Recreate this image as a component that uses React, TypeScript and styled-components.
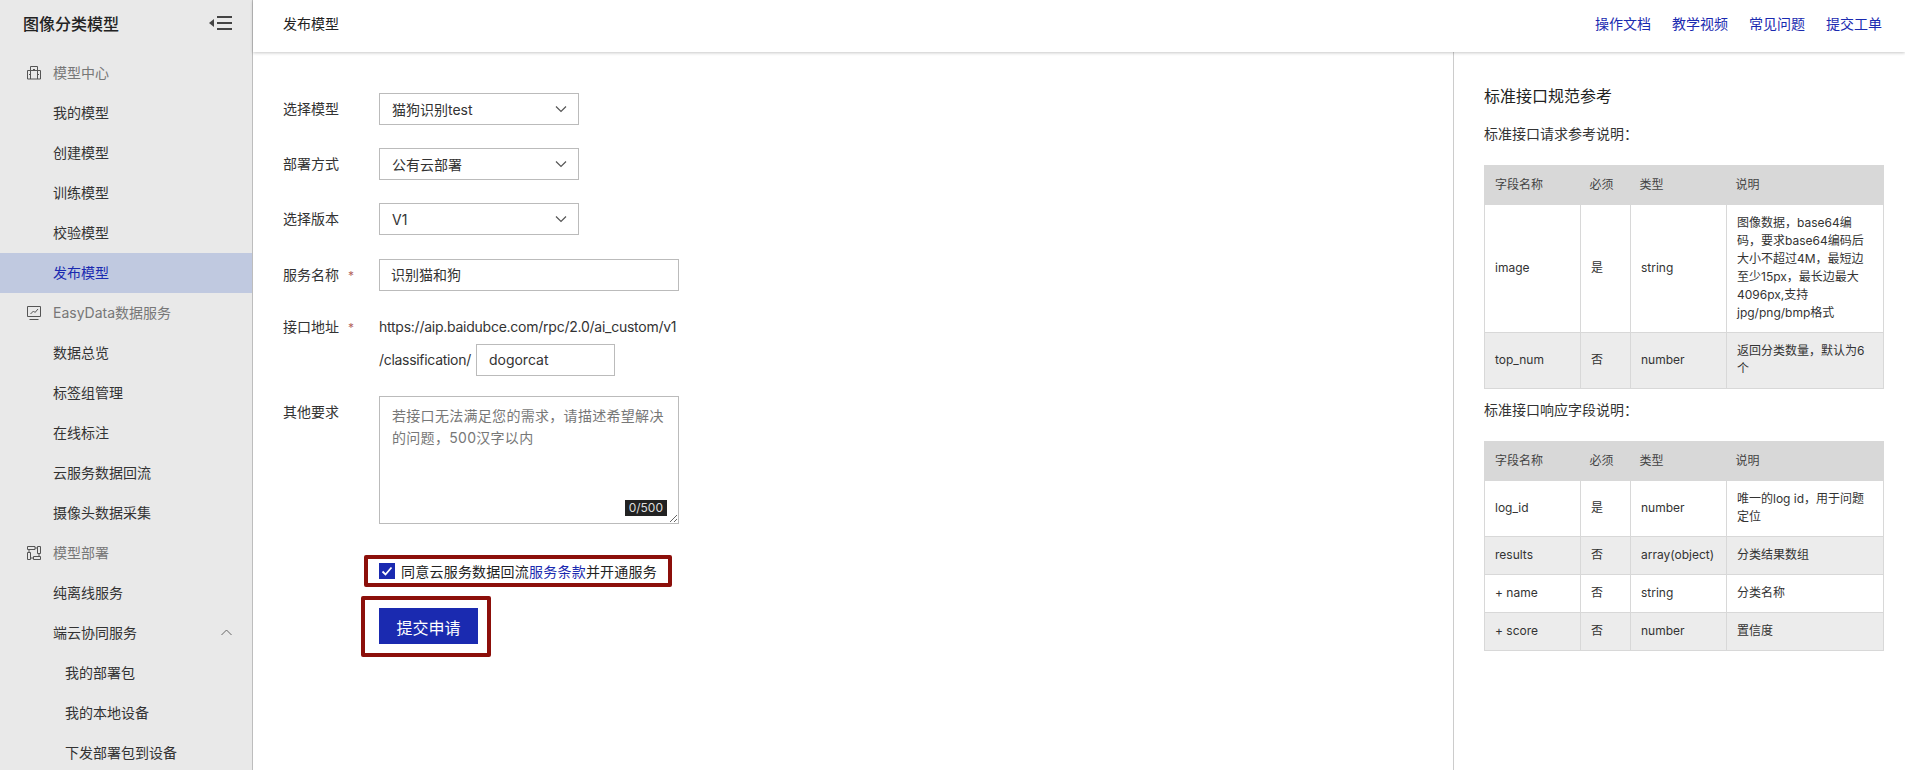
import React from "react";
import styled, { createGlobalStyle } from "styled-components";

const Global = createGlobalStyle`
  html, body { margin: 0; padding: 0; height: 770px; overflow: hidden; background: #fff; }
  body { font-family: Inter, "Noto Sans CJK SC", sans-serif; color: #333; font-size: 14px; }
  * { box-sizing: border-box; }
`;

const Page = styled.div`
  display: flex;
  width: 1905px;
  height: 770px;
  overflow: hidden;
`;

const Sidebar = styled.aside`
  width: 253px;
  height: 770px;
  flex: none;
  background: #e9e9e9;
  border-right: 1px solid #bdbdbd;
  overflow: hidden;
  color: #333;
`;

const SideHead = styled.div`
  display: flex;
  align-items: center;
  justify-content: space-between;
  height: 46px;
  padding: 0 20px 1px 23px;
  margin-bottom: 7px;
  font-size: 16px;
  font-weight: 500;
  color: #222;
`;

const NavItem = styled.div<{ $kind?: "group" | "active" | "sub" }>`
  display: flex;
  align-items: center;
  height: 40px;
  flex: none;
  padding: 0 20px 2px ${(p) => (p.$kind === "sub" ? 65 : 53)}px;
  position: relative;
  color: ${(p) =>
    p.$kind === "group" ? "#777" : p.$kind === "active" ? "#1a2ab0" : "#333"};
  background: ${(p) => (p.$kind === "active" ? "#c0c9e0" : "transparent")};
`;

const NavIcon = styled.svg`
  position: absolute;
  left: 27px;
  top: 13px;
  width: 14px;
  height: 14px;
  fill: none;
  stroke: #555;
  stroke-width: 1;
`;

const Chevron = styled.svg`
  margin-left: auto;
  width: 11px;
  height: 7px;
  fill: none;
  stroke: #666;
  stroke-width: 1;
`;

const Main = styled.div`
  flex: 1;
  display: flex;
  flex-direction: column;
  min-width: 0;
`;

const TopBar = styled.header`
  height: 52px;
  flex: none;
  display: flex;
  align-items: center;
  justify-content: space-between;
  padding: 0 23px 7px 30px;
  background: #fff;
  box-shadow: 0 1px 3px rgba(0, 0, 0, 0.22);
  color: #222;
  position: relative;
`;

const TopLinks = styled.nav`
  display: flex;
  gap: 21px;
`;

const BlueLink = styled.a`
  color: #1a2ab0;
  text-decoration: none;
`;

const Body = styled.div`
  flex: 1;
  display: flex;
  min-height: 0;
`;

const FormArea = styled.main`
  flex: 1;
  padding: 41px 0 0 30px;
`;

const FormRow = styled.div<{ $mb?: number }>`
  display: flex;
  margin-bottom: ${(p) => p.$mb ?? 23}px;
`;

const Label = styled.label`
  width: 96px;
  flex: none;
  line-height: 31px;
  height: 32px;
  color: #333;
`;

const Star = styled.span`
  color: #b5655f;
  margin-left: 9px;
  font-size: 12px;
`;

const SelectBox = styled.div`
  width: 200px;
  height: 32px;
  border: 1px solid #bbb;
  display: flex;
  align-items: center;
  justify-content: space-between;
  padding: 0 11px 0 12px;
  background: #fff;
  color: #333;
`;

const SelectArrow = styled.svg`
  width: 12px;
  height: 8px;
  fill: none;
  stroke: #555;
  stroke-width: 1.2;
`;

const TextField = styled.div<{ $w: number; $cjk?: boolean }>`
  width: ${(p) => p.$w}px;
  height: 32px;
  border: 1px solid #bbb;
  display: flex;
  align-items: center;
  padding: 0 12px ${(p) => (p.$cjk ? 3 : 1)}px ${(p) => (p.$cjk ? 11 : 12)}px;
  background: #fff;
  color: #333;
  flex: none;
`;

const AddressCol = styled.div`
  width: 300px;
  display: flex;
  flex-direction: column;
`;

const AddressLine = styled.div`
  line-height: 31px;
  white-space: nowrap;
  height: 33px;
  color: #333;
  letter-spacing: -0.25px;
`;

const AddressRow = styled.div`
  display: flex;
  align-items: center;
  gap: 5px;
`;

const AddressPrefix = styled.span`
  letter-spacing: -0.3px;
  margin-top: -2px;
`;

const TextAreaBox = styled.div`
  width: 300px;
  height: 128px;
  border: 1px solid #bbb;
  padding: 8px 12px;
  line-height: 22px;
  letter-spacing: 0.3px;
  color: #777;
  position: relative;
`;

const Counter = styled.span`
  position: absolute;
  right: 11px;
  bottom: 7px;
  background: #222;
  color: #ddd;
  font-size: 12px;
  line-height: 16px;
  letter-spacing: 0;
  padding: 0 4px;
`;

const Grip = styled.svg`
  position: absolute;
  right: 0;
  bottom: 0;
  width: 9px;
  height: 9px;
  stroke: #666;
  stroke-width: 1;
`;

const AgreeBox = styled.div`
  width: 308px;
  height: 32px;
  margin-left: 81px;
  border: 4px solid #8c0f0a;
  border-radius: 2px;
  display: flex;
  align-items: center;
  padding-left: 11px;
  gap: 6px;
  color: #222;
  white-space: nowrap;
  letter-spacing: 0.22px;
`;

const CheckMark = styled.svg`
  width: 16px;
  height: 16px;
  flex: none;
`;

const SubmitFrame = styled.div`
  width: 130px;
  height: 61px;
  margin: 9px 0 0 78px;
  border: 4px solid #8c0f0a;
  border-radius: 2px;
  padding: 8px 0 0 14px;
`;

const SubmitButton = styled.button`
  width: 99px;
  height: 36px;
  border: 0;
  padding: 2px 0 0;
  background: #1a2ab0;
  color: #fff;
  font: inherit;
  font-size: 16px;
`;

const RefPanel = styled.section`
  width: 452px;
  flex: none;
  border-left: 1px solid #ccc;
  padding: 33px 22px 0 30px;
`;

const RefTitle = styled.h2`
  margin: 0;
  font-size: 16px;
  font-weight: 400;
  line-height: 22px;
  color: #222;
`;

const RefSub = styled.p<{ $top: number }>`
  margin: ${(p) => p.$top}px 0 20px;
  line-height: 22px;
  color: #333;
`;

const SpecTable = styled.table`
  width: 399px;
  table-layout: fixed;
  border-collapse: collapse;
  font-size: 12px;
  line-height: 18px;
  color: #333;
  border: 1px solid #d8d8d8;
`;

const HeadCell = styled.th<{ $w: number }>`
  width: ${(p) => p.$w}px;
  height: 39px;
  background: #d8d8d8;
  font-weight: 400;
  text-align: left;
  padding: 0 9px;
  color: #444;
  &:first-child { padding-left: 10px; }
`;

const BodyRow = styled.tr`
  &:nth-child(even) td { background: #ececec; }
`;

const Cell = styled.td`
  border: 1px solid #d8d8d8;
  padding: 9px 10px 10px;
  vertical-align: middle;
  background: #fff;
`;

const COLS = [96, 50, 96, 157];
const HEADS = ["字段名称", "必须", "类型", "说明"];

const req = [
  ["image", "是", "string", "图像数据，base64编码，要求base64编码后大小不超过4M，最短边至少15px，最长边最大4096px,支持jpg/png/bmp格式"],
  ["top_num", "否", "number", "返回分类数量，默认为6个"],
];
const res = [
  ["log_id", "是", "number", "唯一的log id，用于问题定位"],
  ["results", "否", "array(object)", "分类结果数组"],
  ["+ name", "否", "string", "分类名称"],
  ["+ score", "否", "number", "置信度"],
];

const Spec = ({ rows }: { rows: string[][] }) => (
  <SpecTable>
    <thead>
      <tr>
        {HEADS.map((h, i) => (
          <HeadCell key={h} $w={COLS[i]}>{h}</HeadCell>
        ))}
      </tr>
    </thead>
    <tbody>
      {rows.map((r) => (
        <BodyRow key={r[0]}>
          {r.map((c, i) => (
            <Cell key={i}>{c}</Cell>
          ))}
        </BodyRow>
      ))}
    </tbody>
  </SpecTable>
);

const Arrow = () => (
  <SelectArrow viewBox="0 0 12 8"><path d="M1 1.5 6 6.5 11 1.5" /></SelectArrow>
);

const MenuToggle = () => (
  <svg width="23" height="16" viewBox="0 0 23 16" fill="none">
    <path d="M0 8 5 4v8z" fill="#444" />
    <path d="M8 2h15M8 8h15M8 14h15" stroke="#444" strokeWidth="1.8" />
  </svg>
);

export default function App() {
  return (
    <Page>
      <Global />
      <Sidebar>
        <SideHead>图像分类模型<MenuToggle /></SideHead>
        <NavItem $kind="group">
          <NavIcon viewBox="0 0 14 14"><path d="M.5 4.500h13v8.500H.5zM3.500 13V.5h7V13M2 8.500h1.500M6 3.500h2M10.500 8.500H12" /></NavIcon>
          模型中心
        </NavItem>
        <NavItem>我的模型</NavItem>
        <NavItem>创建模型</NavItem>
        <NavItem>训练模型</NavItem>
        <NavItem>校验模型</NavItem>
        <NavItem $kind="active">发布模型</NavItem>
        <NavItem $kind="group">
          <NavIcon viewBox="0 0 14 14"><path d="M.5.500h13v10H.500zM2.500 13.500h9M3.500 8l3-3 1.500 1.500 3-3.500" /></NavIcon>
          EasyData数据服务
        </NavItem>
        <NavItem>数据总览</NavItem>
        <NavItem>标签组管理</NavItem>
        <NavItem>在线标注</NavItem>
        <NavItem>云服务数据回流</NavItem>
        <NavItem>摄像头数据采集</NavItem>
        <NavItem $kind="group">
          <NavIcon viewBox="0 0 14 14"><path d="M.5.500H8v3H.500zM10.500.500h3v7h-3zM.5 6.500h3v7h-3zM6.500 10.500h7v3h-7zM8 2h2.500M12 7.500v3M3.500 12h3M2 3.500v3" /></NavIcon>
          模型部署
        </NavItem>
        <NavItem>纯离线服务</NavItem>
        <NavItem>
          端云协同服务
          <Chevron viewBox="0 0 11 7"><path d="M.5 6 5.500 1l5 5" /></Chevron>
        </NavItem>
        <NavItem $kind="sub">我的部署包</NavItem>
        <NavItem $kind="sub">我的本地设备</NavItem>
        <NavItem $kind="sub">下发部署包到设备</NavItem>
      </Sidebar>
      <Main>
        <TopBar>
          <span>发布模型</span>
          <TopLinks>
            <BlueLink>操作文档</BlueLink>
            <BlueLink>教学视频</BlueLink>
            <BlueLink>常见问题</BlueLink>
            <BlueLink>提交工单</BlueLink>
          </TopLinks>
        </TopBar>
        <Body>
          <FormArea>
            <FormRow>
              <Label>选择模型</Label>
              <SelectBox>猫狗识别test<Arrow /></SelectBox>
            </FormRow>
            <FormRow>
              <Label>部署方式</Label>
              <SelectBox>公有云部署<Arrow /></SelectBox>
            </FormRow>
            <FormRow $mb={24}>
              <Label>选择版本</Label>
              <SelectBox>V1<Arrow /></SelectBox>
            </FormRow>
            <FormRow $mb={20}>
              <Label>服务名称<Star>*</Star></Label>
              <TextField $w={300} $cjk>识别猫和狗</TextField>
            </FormRow>
            <FormRow $mb={20}>
              <Label>接口地址<Star>*</Star></Label>
              <AddressCol>
                <AddressLine>https://aip.baidubce.com/rpc/2.0/ai_custom/v1</AddressLine>
                <AddressRow>
                  <AddressPrefix>/classification/</AddressPrefix>
                  <TextField $w={139}>dogorcat</TextField>
                </AddressRow>
              </AddressCol>
            </FormRow>
            <FormRow $mb={31}>
              <Label>其他要求</Label>
              <TextAreaBox>
                若接口无法满足您的需求，请描述希望解决的问题，500汉字以内
                <Counter>0/500</Counter>
                <Grip viewBox="0 0 9 9"><path d="M1 8 8 1M5 8 8 5" /></Grip>
              </TextAreaBox>
            </FormRow>
            <AgreeBox>
              <CheckMark viewBox="0 0 16 16">
                <rect width="16" height="16" fill="#1a2ab0" />
                <path d="M3.500 8.500 6.500 11.500 12.500 4.500" fill="none" stroke="#fff" strokeWidth="1.800" />
              </CheckMark>
              <span>同意云服务数据回流<BlueLink>服务条款</BlueLink>并开通服务</span>
            </AgreeBox>
            <SubmitFrame>
              <SubmitButton>提交申请</SubmitButton>
            </SubmitFrame>
          </FormArea>
          <RefPanel>
            <RefTitle>标准接口规范参考</RefTitle>
            <RefSub $top={16}>标准接口请求参考说明：</RefSub>
            <Spec rows={req} />
            <RefSub $top={10}>标准接口响应字段说明：</RefSub>
            <Spec rows={res} />
          </RefPanel>
        </Body>
      </Main>
    </Page>
  );
}
